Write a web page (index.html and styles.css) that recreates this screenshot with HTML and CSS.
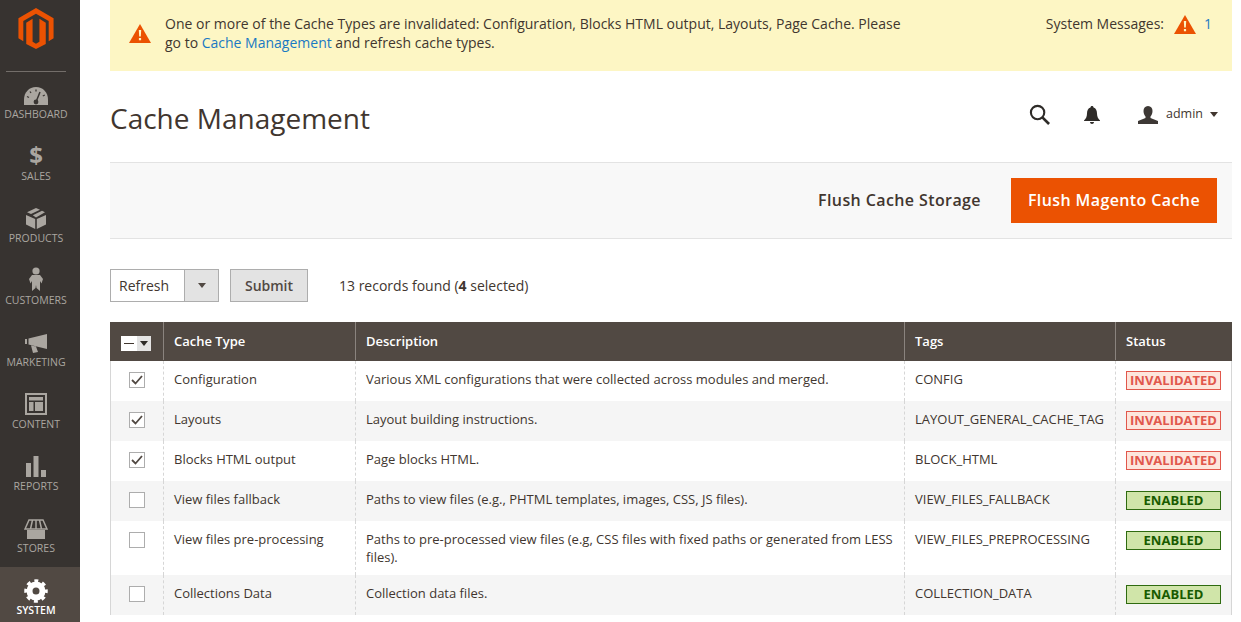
FILE: index.html
```html
<!DOCTYPE html>
<html lang="en">
<head>
<meta charset="utf-8">
<title>Cache Management</title>
<link rel="stylesheet" href="styles.css">
</head>
<body>
<div class="app">
<nav class="side">
  <div class="logo">
    <svg width="36" height="41" viewBox="0 0 36 42"><path fill="#eb5202" d="M18 0 36 10.400V31L31 34V13.300L18 5.800 5 13.300V34L0 31V10.400Z"/><path fill="#eb5202" d="M8 15 14.500 11V34.500L18 36.500 21.500 34.500V11L28 15V37L18 42 8 37Z"/></svg>
  </div>
  <div class="rule"></div>
  <a class="item first">
    <svg class="ic" width="24" height="18" viewBox="0 0 24 18"><path fill="#aaa6a0" d="M12 0C5 0 0 5.500 0 12.500V18H24V12.500C24 5.500 19 0 12 0Z"/><path stroke="#3a3633" stroke-width="1.500" fill="none" d="M12 15 16 5"/><circle cx="12" cy="15" r="2.400" fill="#3a3633"/><path stroke="#3a3633" stroke-width="1.300" d="M12 2.500V4.500M6 4.500 7 6M3 9.500 5 10.500M18.800 9 20.800 8"/></svg>
    <span>DASHBOARD</span>
  </a>
  <a class="item">
    <span class="dollar">$</span>
    <span>SALES</span>
  </a>
  <a class="item">
    <svg class="ic" width="20" height="21" viewBox="0 0 20 21"><path fill="#aaa6a0" d="M0 7 9.200 11V21L0 16.500ZM20 7 10.800 11V21L20 16.500ZM10 0 14 1.800 5 6 1 4.200ZM16 2.800 19 4.200 10 9.500 6.800 7.200Z"/></svg>
    <span>PRODUCTS</span>
  </a>
  <a class="item">
    <svg class="ic" width="14" height="24" viewBox="0 0 14 24"><circle cx="7" cy="4" r="3.600" fill="#aaa6a0"/><path fill="#aaa6a0" d="M3 8H11L14 12 12.500 16.500 11 14V24L7.500 21 7 18 6.500 21 3 24V14L1.500 16.500 0 12Z"/></svg>
    <span>CUSTOMERS</span>
  </a>
  <a class="item">
    <svg class="ic" width="22" height="19" viewBox="0 0 22 19"><path fill="#aaa6a0" d="M0 5H2V10H0ZM3.500 4.500 22 0V15L3.500 10.500ZM6 11.500 11 12.500 13 18 8 19Z"/></svg>
    <span>MARKETING</span>
  </a>
  <a class="item">
    <svg class="ic" width="22" height="22" viewBox="0 0 22 22"><path fill="#aaa6a0" fill-rule="evenodd" d="M0 0H22V22H0ZM2 2V20H20V2ZM4 4H18V7.500H4ZM4 9H8.500V18H4ZM10 9H18V18H10Z"/></svg>
    <span>CONTENT</span>
  </a>
  <a class="item">
    <svg class="ic" width="20" height="21" viewBox="0 0 20 21"><path fill="#aaa6a0" d="M0 7H5V21H0ZM7.500 0H12.500V21H7.500ZM15 14H20V21H15Z"/></svg>
    <span>REPORTS</span>
  </a>
  <a class="item">
    <svg class="ic" width="24" height="20" viewBox="0 0 24 20"><path fill="#aaa6a0" d="M3 11H21V20H3Z"/><path fill="none" stroke="#aaa6a0" stroke-width="1.500" d="M5 1H19L23 10H1ZM8.500 1 6.500 10M12 1V10M15.500 1 17.500 10"/></svg>
    <span>STORES</span>
  </a>
  <a class="item active">
    <svg class="ic" width="24" height="24" viewBox="0 0 24 24"><circle cx="12" cy="12" r="6.500" fill="none" stroke="#fff" stroke-width="6"/><circle cx="12" cy="12" r="10" fill="none" stroke="#fff" stroke-width="3.500" stroke-dasharray="3.850 4" stroke-dashoffset="1.900"/></svg>
    <span>SYSTEM</span>
  </a>
</nav>
<main class="main">
  <div class="notice">
    <svg class="warn" width="22" height="19" viewBox="0 0 22 19"><path fill="#eb5202" d="M11 0 22 19H0Z"/><path fill="#fdf6c4" d="M9.800 6H12.200L11.800 12.500H10.200ZM9.900 14H12.100V16.200H9.900Z"/></svg>
    <p class="notice-text">One or more of the Cache Types are invalidated: Configuration, Blocks HTML output, Layouts, Page Cache. Please go to <a class="link">Cache Management</a> and refresh cache types.</p>
    <div class="sysmsg">
      <span>System Messages:</span>
      <svg width="22" height="19" viewBox="0 0 22 19"><path fill="#eb5202" d="M11 0 22 19H0Z"/><path fill="#fdf6c4" d="M9.800 6H12.200L11.800 12.500H10.200ZM9.900 14H12.100V16.200H9.900Z"/></svg>
      <a class="link num">1</a>
    </div>
  </div>
  <header class="head">
    <h1>Cache Management</h1>
    <div class="tools">
      <svg class="t-search" width="21" height="21" viewBox="0 0 22 22"><circle cx="9" cy="9" r="7" fill="none" stroke="#2e2b28" stroke-width="2.200"/><path stroke="#2e2b28" stroke-width="2.800" d="M14 14 21 21"/></svg>
      <svg class="t-bell" width="16" height="18" viewBox="0 0 16 18"><path fill="#2e2b28" d="M8 0C9 0 9.500 .7 9.500 1.500 12 2.300 13 4.500 13 7.500 13 10.500 14 12.500 16 14.500V15H0V14.500C2 12.500 3 10.500 3 7.500 3 4.500 4 2.300 6.500 1.500 6.500 .7 7 0 8 0ZM6 16H10C10 17.300 9 18 8 18 7 18 6 17.300 6 16Z"/></svg>
      <div class="user">
        <svg width="20" height="18" viewBox="0 0 20 18"><path fill="#3d3835" d="M10 0C13 0 14.500 2.200 14.500 5 14.500 7.500 13.500 9.500 12.500 10.500V12L20 15V18H0V15L7.500 12V10.500C6.500 9.500 5.500 7.500 5.500 5 5.500 2.200 7 0 10 0Z"/></svg>
        <span class="uname">admin</span>
        <i class="caret"></i>
      </div>
    </div>
  </header>
  <div class="actions">
    <a class="btn-plain">Flush Cache Storage</a>
    <a class="btn-primary">Flush Magento Cache</a>
  </div>
  <div class="massbar">
    <div class="select"><span class="select-val">Refresh</span><span class="select-arr"><i class="caret small"></i></span></div>
    <button class="submit">Submit</button>
    <span class="count">13 records found (<b>4</b> selected)</span>
  </div>
  <table class="grid">
    <colgroup><col class="c1"><col class="c2"><col class="c3"><col class="c4"><col class="c5"></colgroup>
    <thead>
      <tr>
        <th class="chk"><span class="mass"><span class="mass-a"><i></i></span><span class="mass-b"><i class="caret tiny"></i></span></span></th>
        <th>Cache Type</th><th>Description</th><th>Tags</th><th>Status</th>
      </tr>
    </thead>
    <tbody>
      <tr><td class="chk"><span class="box on"><svg width="12" height="10" viewBox="0 0 12 10"><path fill="none" stroke="#514943" stroke-width="1.800" d="M1 5 4.500 8.500 11 1"/></svg></span></td><td>Configuration</td><td>Various XML configurations that were collected across modules and merged.</td><td>CONFIG</td><td><span class="st bad">INVALIDATED</span></td></tr>
      <tr class="alt"><td class="chk"><span class="box on"><svg width="12" height="10" viewBox="0 0 12 10"><path fill="none" stroke="#514943" stroke-width="1.800" d="M1 5 4.500 8.500 11 1"/></svg></span></td><td>Layouts</td><td>Layout building instructions.</td><td>LAYOUT_GENERAL_CACHE_TAG</td><td><span class="st bad">INVALIDATED</span></td></tr>
      <tr><td class="chk"><span class="box on"><svg width="12" height="10" viewBox="0 0 12 10"><path fill="none" stroke="#514943" stroke-width="1.800" d="M1 5 4.500 8.500 11 1"/></svg></span></td><td>Blocks HTML output</td><td>Page blocks HTML.</td><td>BLOCK_HTML</td><td><span class="st bad">INVALIDATED</span></td></tr>
      <tr class="alt"><td class="chk"><span class="box"></span></td><td>View files fallback</td><td>Paths to view files (e.g., PHTML templates, images, CSS, JS files).</td><td>VIEW_FILES_FALLBACK</td><td><span class="st ok">ENABLED</span></td></tr>
      <tr><td class="chk"><span class="box"></span></td><td>View files pre-processing</td><td>Paths to pre-processed view files (e.g, CSS files with fixed paths or generated from LESS files).</td><td>VIEW_FILES_PREPROCESSING</td><td><span class="st ok">ENABLED</span></td></tr>
      <tr class="alt"><td class="chk"><span class="box"></span></td><td>Collections Data</td><td>Collection data files.</td><td>COLLECTION_DATA</td><td><span class="st ok">ENABLED</span></td></tr>
    </tbody>
  </table>
</main>
</div>
</body>
</html>
```
FILE: styles.css
```css
* { box-sizing: border-box; }
html, body { margin: 0; height: 622px; overflow: hidden; background: #fff; }
body { font-family: "Open Sans", sans-serif; font-size: 13px; color: #41362f; }
.app { display: flex; height: 622px; overflow: hidden; }
.side { width: 80px; flex: none; background: #373330; display: flex; flex-direction: column; height: 622px; }
.logo { height: 71px; padding: 8px 8px 0 0; display: flex; justify-content: center; align-items: flex-start; flex: none; }
.rule { width: 60px; height: 1px; background: #736e6a; margin: 0 0 0 6px; flex: none; }
.item { height: 62px; flex: none; padding-right: 8px; display: flex; flex-direction: column; align-items: center; justify-content: flex-end; color: #aaa6a0; font-size: 10.5px; line-height: 14px; padding-bottom: 5px; gap: 2px; }
.item.first { height: 54px; }
.item .ic { display: block; }
.dollar { font-size: 24px; line-height: 24px; font-weight: 700; color: #aaa6a0; font-family: "Open Sans", sans-serif; }
.item.active { background: #514943; color: #fff; font-weight: 600; height: 55px; margin-top: 7px; gap: 0; }
.main { flex: 1; min-width: 0; padding: 0 9px 0 30px; }
.notice { height: 71px; background: #fdf6c4; display: flex; align-items: flex-start; padding: 14px 20px 0 19px; font-size: 14px; line-height: 19px; color: #41362f; }
.warn { flex: none; margin: 10px 14px 0 0; }
.notice-text { margin: 0; width: 745px; }
.link { color: #1979c3; }
.sysmsg { margin-left: auto; display: flex; align-items: flex-start; gap: 10px; }
.sysmsg svg { margin-top: 1px; }
.num { margin-left: -2px; }
.head { height: 91px; display: flex; align-items: center; justify-content: space-between; padding-top: 2px; }
h1 { margin: 0; font-size: 28px; font-weight: 400; color: #41362f; line-height: 36px; }
.tools { display: flex; align-items: center; padding-right: 14px; margin-bottom: 6px; }
.t-search { margin-right: 34px; }
.t-bell { margin-right: 38px; }
.user { display: flex; align-items: center; gap: 9px; font-size: 12.5px; color: #41362f; }
.uname { margin: -3px -2px 0 -1px; }
.caret { display: inline-block; width: 0; height: 0; border-left: 4px solid transparent; border-right: 4px solid transparent; border-top: 5px solid #41362f; }
.actions { height: 77px; background: #f8f8f8; border-top: 1px solid #e3e3e3; border-bottom: 1px solid #e3e3e3; display: flex; align-items: center; justify-content: flex-end; padding-right: 15px; gap: 30px; }
.btn-plain { font-size: 16px; font-weight: 600; color: #41362f; letter-spacing: .4px; padding-bottom: 2px; }
.btn-primary { width: 206px; height: 45px; background: #eb5202; color: #fff; font-size: 16px; font-weight: 600; display: flex; align-items: center; justify-content: center; letter-spacing: .4px; padding-bottom: 2px; }
.massbar { display: flex; align-items: center; padding-top: 29px; height: 83px; padding-bottom: 20px; font-size: 14px; }
.select { display: flex; width: 109px; height: 33px; border: 1px solid #adadad; background: #fff; }
.select-val { flex: 1; padding-left: 8px; line-height: 31px; }
.select-arr { width: 34px; background: #e3e3e3; border-left: 1px solid #adadad; display: flex; align-items: center; justify-content: center; }
.caret.small { border-top-color: #514943; }
.submit { margin-left: 11px; width: 78px; height: 33px; background: #e3e3e3; border: 1px solid #adadad; color: #514943; font: 600 14px "Open Sans", sans-serif; padding: 0; }
.count { margin-left: 31px; color: #41362f; }
.grid { width: 1121px; border-collapse: collapse; table-layout: fixed; font-size: 13px; }
.c1 { width: 53px; } .c2 { width: 192px; } .c3 { width: 549px; } .c4 { width: 211px; } .c5 { width: 116px; }
.grid th { height: 38px; background: #514943; color: #fff; text-align: left; font-weight: 600; padding: 0 10px 2px; border: 1px solid #8a837e; border-top-color: #514943; border-bottom-color: #514943; }
.grid th:first-child { border-left-color: #514943; }
.grid th:last-child { border-right-color: #514943; }
.grid td { height: 40px; padding: 9px 10px; line-height: 18px; color: #41362f; border-left: 1px dashed #d6d6d6; border-right: 1px dashed #d6d6d6; vertical-align: top; }
.grid td:first-child { border-left: 1px solid #d6d6d6; }
.grid td:last-child { border-right: 1px solid #d6d6d6; padding: 10px 10px 0; }
.grid td.chk, .grid th.chk { padding: 0; text-align: center; }
.grid td.chk { padding-top: 11px; }
.alt td { background: #f5f5f5; }
.box { display: inline-flex; width: 16px; height: 16px; border: 1px solid #adadad; background: #fff; align-items: center; justify-content: center; vertical-align: top; }
.mass { display: inline-flex; height: 15px; vertical-align: middle; margin-right: 2px; }
.mass-a { width: 16px; background: #fff; display: flex; align-items: center; justify-content: center; }
.mass-a i { width: 10px; height: 1px; background: #41362f; display: block; }
.mass-b { width: 14px; background: #e3e3e3; display: flex; align-items: center; justify-content: center; }
.caret.tiny { border-top-color: #2e2b28; }
.st { display: block; height: 19px; width: 95px; font-size: 13px; font-weight: 700; line-height: 17px; text-align: center; border: 1px solid; }
.bad { color: #e1574c; background: #fde5dc; border-color: #e1574c; }
.ok { color: #185b00; background: #d0e5a9; border-color: #2f6b10; }
```
